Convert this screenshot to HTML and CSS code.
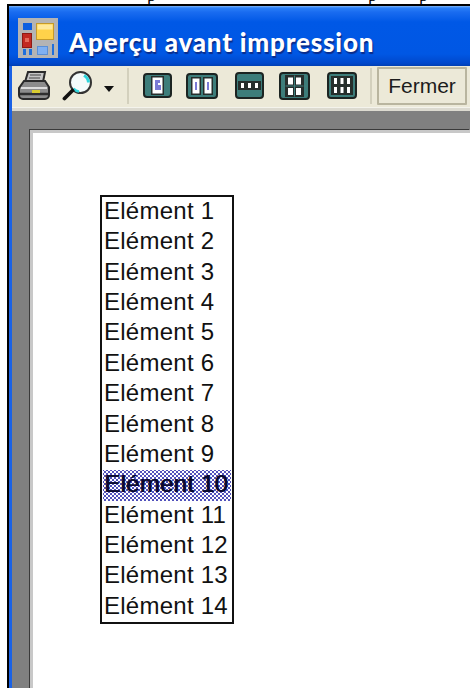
FILE: index.html
```html
<!DOCTYPE html>
<html lang="fr">
<head>
<meta charset="utf-8">
<title>Aperçu avant impression</title>
<link rel="stylesheet" href="styles.css">
</head>
<body>
<div class="cut-line"><span>p</span><span class="p2">p</span><span class="p3">p</span></div>
<div class="window">
  <header class="titlebar">
    <svg class="app-icon" width="40" height="40" viewBox="0 0 40 40">
      <rect width="40" height="40" fill="#b4b4b4"/>
      <rect x="5" y="5" width="9" height="7" fill="#0d5fe0"/>
      <rect x="18.500" y="5.500" width="17" height="16" fill="#ffd24a" stroke="#c59a2a"/>
      <rect x="19.500" y="6.500" width="15" height="5" fill="#ffe99a"/>
      <rect x="4.500" y="15.500" width="9" height="14" fill="#c22a22" stroke="#8f1a14"/>
      <rect x="7" y="20" width="4" height="4" fill="#e56a5a"/>
      <rect x="5" y="31" width="3" height="6" fill="#1f6fdc"/>
      <rect x="11" y="31" width="3" height="6" fill="#1f6fdc"/>
      <rect x="19.500" y="28.500" width="10" height="8" fill="#7fb0f2" stroke="#5a8fd6"/>
      <rect x="34" y="26" width="2" height="11" fill="#1f6fdc"/>
    </svg>
    <h1 class="title">Aperçu avant impression</h1>
  </header>
  <div class="main">
    <div class="toolbar">
      <svg class="tool print" width="32" height="31" viewBox="0 0 32 31">
        <path d="M10 2h17l-2 10H7z" fill="#c4c4c4" stroke="#2a2a2a" stroke-width="2"/>
        <path d="M12 5h11M11 8h11" stroke="#6e6e6e" stroke-width="1.500"/>
        <path d="M6 11h21l4 6v8a4 4 0 0 1-4 4H5a4 4 0 0 1-4-4v-7z" fill="#8c8c8c" stroke="#2a2a2a" stroke-width="2"/>
        <path d="M3 18h26" stroke="#dcdcdc" stroke-width="2"/>
        <path d="M2 24h28" stroke="#2f2f2f" stroke-width="2.500"/>
        <rect x="14" y="20" width="8" height="3" fill="#d8cc30"/>
      </svg>
      <svg class="tool lens" width="30" height="30" viewBox="0 0 30 30">
        <circle cx="18.500" cy="11.500" r="10.500" fill="#f4fbfb" stroke="#333" stroke-width="2"/>
        <path d="M22 4.500a8.500 8.500 0 0 1 4.500 7" stroke="#2fd6dc" stroke-width="3" fill="none"/>
        <path d="M11.500 17.500a9 9 0 0 0 5.500 3" stroke="#2fd6dc" stroke-width="2.500" fill="none"/>
        <path d="M10.500 19.500 2.500 27.500" stroke="#111" stroke-width="3.800" stroke-linecap="round"/>
      </svg>
      <span class="caret"></span>
      <span class="sep"></span>
      <svg class="pages gap-14" width="29" height="25" viewBox="0 0 29 25">
        <rect class="pad" x="1" y="1" width="27" height="23" rx="3"/>
        <rect class="frame" x="8.500" y="3.500" width="12" height="18"/>
        <rect class="sheet" x="9.500" y="4.500" width="10" height="16"/>
        <path d="M12 7h5v3h-2v2h3v5h-6z" fill="#7a7ad6"/>
      </svg>
      <svg class="pages gap-17" width="32" height="26" viewBox="0 0 32 26">
        <rect class="pad" x="1" y="1" width="30" height="24" rx="3"/>
        <rect class="frame" x="5.500" y="4.500" width="9" height="17"/>
        <rect class="frame" x="17.500" y="4.500" width="9" height="17"/>
        <rect class="sheet" x="6.500" y="5.500" width="7" height="15"/>
        <rect class="sheet" x="18.500" y="5.500" width="7" height="15"/>
        <rect x="9" y="9" width="2" height="8" fill="#7a7ad6"/>
        <rect x="21" y="9" width="2" height="8" fill="#7a7ad6"/>
      </svg>
      <svg class="pages gap-15" width="29" height="27" viewBox="0 0 29 27">
        <rect class="pad" x="1" y="1" width="27" height="25" rx="3"/>
        <rect class="frame" x="3.500" y="9.500" width="22" height="8"/>
        <rect class="sheet" x="6" y="11" width="3" height="5"/>
        <rect class="sheet" x="13" y="11" width="3" height="5"/>
        <rect class="sheet" x="20" y="11" width="3" height="5"/>
      </svg>
      <svg class="pages gap-17" width="31" height="28" viewBox="0 0 31 28">
        <rect class="pad" x="1" y="1" width="29" height="26" rx="3"/>
        <rect class="frame" x="6.500" y="3.500" width="18" height="21"/>
        <path class="frame-line" d="M15.500 3.500v21M6.500 14h18"/>
        <rect class="sheet" x="9" y="5.500" width="5" height="7"/>
        <rect class="sheet" x="17" y="5.500" width="5" height="7"/>
        <rect class="sheet" x="9" y="16" width="5" height="7"/>
        <rect class="sheet" x="17" y="16" width="5" height="7"/>
      </svg>
      <svg class="pages gap-13" width="30" height="27" viewBox="0 0 30 27">
        <rect class="pad" x="1" y="1" width="28" height="25" rx="3"/>
        <rect class="frame" x="4.500" y="4.500" width="21" height="18"/>
        <g class="sheet">
          <rect x="7" y="6" width="3" height="6"/><rect x="13.500" y="6" width="3" height="6"/><rect x="20" y="6" width="3" height="6"/>
          <rect x="7" y="15" width="3" height="6"/><rect x="13.500" y="15" width="3" height="6"/><rect x="20" y="15" width="3" height="6"/>
        </g>
      </svg>
      <span class="sep sep-end"></span>
      <button class="close" type="button">Fermer</button>
    </div>
    <div class="preview">
      <div class="sheet-page">
        <ul class="items">
          <li>Elément 1</li>
          <li>Elément 2</li>
          <li>Elément 3</li>
          <li>Elément 4</li>
          <li>Elément 5</li>
          <li>Elément 6</li>
          <li>Elément 7</li>
          <li>Elément 8</li>
          <li>Elément 9</li>
          <li class="selected">Elément 10</li>
          <li>Elément 11</li>
          <li>Elément 12</li>
          <li>Elément 13</li>
          <li>Elément 14</li>
        </ul>
      </div>
    </div>
  </div>
</div>
</body>
</html>
```
FILE: styles.css
```css
html, body {
  margin: 0;
  height: 688px;
  overflow: hidden;
  background: #fff;
}

/* Last printed line of the document behind the dialog, cut by the window edge */
.cut-line {
  height: 4px;
  overflow: hidden;
  display: flex;
  padding-left: 147px;
  font: 18px/1 "Liberation Serif", serif;
  color: #000;
}
.cut-line span {
  display: block;
  margin-top: -14px;
}
.cut-line .p2 { margin-left: 212px; }
.cut-line .p3 { margin-left: 42px; }

.window {
  margin-left: 7px;
  height: 684px;
  border-top: 2px solid #000;
  border-left: 2px solid #000;
  display: flex;
  flex-direction: column;
}

.titlebar {
  height: 60px;
  flex: none;
  display: flex;
  align-items: flex-start;
  gap: 11px;
  padding: 12px 0 0 9px;
  box-sizing: border-box;
  background: linear-gradient(180deg, #7fb4f5 0, #2a80f8 2px, #1a6cf0 6px, #0058e6 16px, #0057e4 48px, #0048cc 57px, #003fb4 60px);
}
.app-icon { flex: none; }
.title {
  margin: 11px 0 0;
  font: 900 26px/1 "Lato", sans-serif;
  letter-spacing: 0.8px;
  color: #fff;
  text-shadow: 1px 2px 1px #0a2c8a;
  white-space: nowrap;
}

.main {
  flex: 1;
  min-height: 0;
  border-left: 3px solid #1a62e6;
  display: flex;
  flex-direction: column;
}

.toolbar {
  height: 45px;
  flex: none;
  box-sizing: border-box;
  display: flex;
  align-items: center;
  padding: 2px 0 5px 6px;
  background: #ece9d8;
  border-bottom: 3px solid #dcdad0;
  box-shadow: inset 0 -1px 0 #f4f3ec;
}
.tool { flex: none; }
.print { margin-right: 12px; }
.caret {
  width: 0;
  height: 0;
  margin: 6px 0 0 12px;
  border-style: solid;
  border-width: 6px 5px 0;
  border-color: #111 transparent transparent;
}
.sep {
  width: 2px;
  height: 36px;
  margin: 0 14px 0 13px;
  background: #d3d0bd;
  flex: none;
}
.sep-end { margin: 0 5px 0 0; }

/* Page-layout buttons: dark rounded pad with the sheets on top */
.pages { flex: none; }
.gap-13 { margin-right: 13px; }
.gap-14 { margin-right: 14px; }
.gap-15 { margin-right: 15px; }
.gap-17 { margin-right: 17px; }
.pad { fill: #3d7d7a; stroke: #1c2422; stroke-width: 2; }
.frame { fill: #262e2c; stroke: #262e2c; }
.frame-line { stroke: #3d7d7a; stroke-width: 1; fill: none; }
.sheet { fill: #fff; }

.close {
  width: 90px;
  height: 38px;
  flex: none;
  padding: 0;
  background: #ece9d8;
  border: 2px solid #b9b59f;
  border-radius: 1px;
  font: 21px/1 "Liberation Sans", sans-serif;
  color: #1c1c1c;
}

.preview {
  flex: 1;
  min-height: 0;
  background: #808080;
  padding: 19px 0 0 18px;
  overflow: hidden;
}

.sheet-page {
  height: 100%;
  box-sizing: border-box;
  background: #fff;
  border-top: 3px solid #c8c8c8;
  border-left: 3px solid #c8c8c8;
  box-shadow: -1px -1px 0 #3a3a3a;
  padding: 62px 0 0 67px;
}

.items {
  list-style: none;
  margin: 0;
  padding: 0;
  width: 130px;
  border: 2px solid #111;
  font: 24px/27px "Liberation Sans", sans-serif;
  letter-spacing: 0.25px;
  color: #111;
}
.items li {
  height: 30.360px;
  padding-left: 2px;
  white-space: nowrap;
}
.items .selected {
  color: #0a0a30;
  text-shadow: 1px 0 0 #0a0a30;
  margin: 0 1px 0 1px;
  padding-left: 1px;
  background-color: #fff;
  background-image:
    radial-gradient(circle, #2222a8 0.6px, transparent 1.1px),
    radial-gradient(circle, #2222a8 0.6px, transparent 1.1px);
  background-size: 4px 4px;
  background-position: 0 0, 2px 2px;
}
```
